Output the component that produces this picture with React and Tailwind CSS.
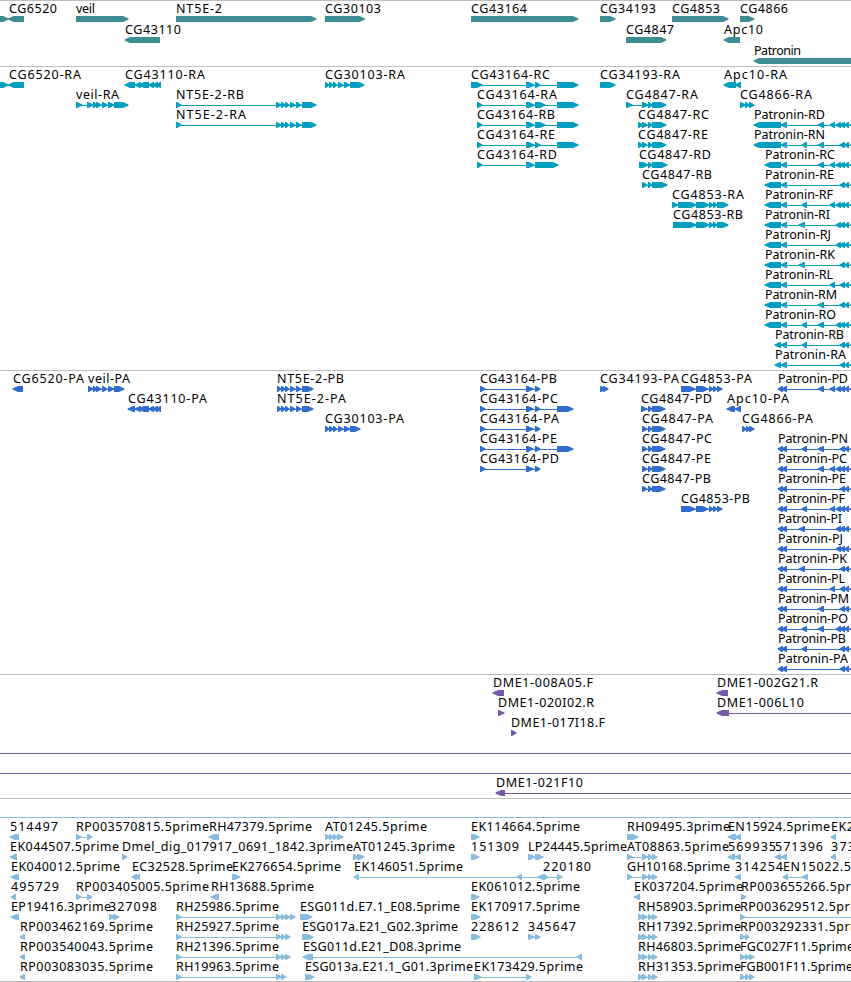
const WIDTH = 851;
const HEAD = 6;

// Advance width of each label character, in pixels
const ADVANCE = {
    A: 9, B: 7, C: 8, D: 9, E: 7, F: 6, G: 8, H: 9, I: 3, J: 4, K: 8, L: 6, M: 10, N: 9,
    O: 9, P: 7, R: 8, S: 7, T: 7, a: 7, c: 6, d: 8, e: 7, g: 8, i: 3, l: 3, m: 11, n: 7,
    o: 7, p: 8, r: 5, t: 4, v: 6, "-": 7, _: 6, ".": 4,
};

const labelWidth = (label) =>
    [...label].reduce((sum, ch) => sum + (ADVANCE[ch] ?? 8), 0);

// Exon sets that several transcripts share
const nt5eCds = [277, 281, 281, 285, 285, 289, 290, 295, 296, 301, 302, 313];
const nt5e = [176, 181, 276, 281, 281, 285, 285, 289, 290, 295, 296, 301, 302, 316];
const cg4847 = [638, 643, 642, 647, 648, 652, 652, 666];
const cg4847Cds = [642, 647, 648, 652, 652, 665];
const cg4853 = [696, 709, 709, 713, 713, 717, 717, 728];
const cg4853Cds = [681, 695, 696, 708, 709, 713, 713, 717, 717, 722];
const cg43164Cds = [480, 485, 526, 533, 535, 540];
const rhExons = [638, 643, 642, 647, 648, 652, 652, 657];
const tail2 = [840, 845, 845, 849, 850, 860];
const tail3 = [836, 841, ...tail2];
const tail4 = [830, 835, ...tail3];
const long = [754, 781, 781, 787];
const mid = [765, 781, 781, 787];
const short = [775, 781, 781, 787];
const cds = [778, 783, 782, 787];

// Feature: [label, strand, exons as start/end pairs]
const tracks = [
    {
        name: "genes",
        color: "#3d8d92",
        rowClass: "h-[21px]",
        boxClass: "h-[66px]",
        rows: [
            [
                ["", 1, [-20, 8]],
                ["CG6520", -1, [8.5, 24]],
                ["veil", 1, [76, 128]],
                ["NT5E-2", 1, [176, 316]],
                ["CG30103", 1, [325, 364.5]],
                ["CG43164", 1, [471, 578]],
                ["CG34193", 1, [600, 615]],
                ["CG4853", 1, [672, 728]],
                ["CG4866", 1, [740, 754]],
            ],
            [
                ["CG43110", -1, [125, 160]],
                ["CG4847", 1, [626, 666]],
                ["Apc10", -1, [724, 740]],
            ],
            [["Patronin", -1, [754, 860]]],
        ],
    },
    {
        name: "transcripts",
        color: "#009fc0",
        rowClass: "h-5",
        boxClass: "h-[304px]",
        rows: [
            [
                ["", 1, [-20, 8]],
                ["CG6520-RA", -1, [8.5, 24]],
                ["CG43110-RA", -1, [125, 135, 135, 141, 139, 149, 149, 154, 153, 158, 157, 161]],
                ["CG30103-RA", 1, [325, 329, 329, 333, 333, 337, 338, 343, 344, 350, 350, 364]],
                ["CG43164-RC", 1, [471, 482, 526, 534, 535, 540, 557, 578]],
                ["CG34193-RA", 1, [600, 604, 602, 615]],
                ["Apc10-RA", -1, [724, 736, 735, 741]],
            ],
            [
                ["veil-RA", 1, [76, 82, 87, 93, 93, 97, 96, 101, 102, 107, 108, 114, 114, 128]],
                ["NT5E-2-RB", 1, nt5e],
                ["CG43164-RA", 1, [477, 482, 526, 534, 535, 545, 557, 578]],
                ["CG4847-RA", 1, [626, 632, 642, 648, 648, 652, 652, 666]],
                ["CG4866-RA", 1, [740, 745, 745, 749, 749, 754]],
            ],
            [
                ["NT5E-2-RA", 1, nt5e],
                ["CG43164-RB", 1, [477, 482, 526, 534, 535, 545, 557, 578]],
                ["CG4847-RC", 1, cg4847],
                ["Patronin-RD", -1, [...long, 818, 824, ...tail4]],
            ],
            [
                ["CG43164-RE", 1, [477, 482, 526, 534, 535, 540, 557, 578]],
                ["CG4847-RE", 1, cg4847],
                ["Patronin-RN", -1, [...long, 802, 807, 818, 824, ...tail2]],
            ],
            [
                ["CG43164-RD", 1, [477, 482, 526, 534, 535, 558]],
                ["CG4847-RD", 1, [639, 648, 648, 652, 652, 667]],
                ["Patronin-RC", -1, [...mid, 818, 824, ...tail4]],
            ],
            [
                ["CG4847-RB", 1, [642, 647, 648, 652, 652, 667]],
                ["Patronin-RE", -1, [...mid, ...tail2]],
            ],
            [
                ["CG4853-RA", 1, [672, 678, 678, 696, ...cg4853]],
                ["Patronin-RF", -1, [...mid, 802, 807, ...tail4]],
            ],
            [
                ["CG4853-RB", 1, [673, 696, ...cg4853]],
                ["Patronin-RI", -1, [...mid, 799, 805, ...tail3]],
            ],
            [["Patronin-RJ", -1, [...mid, ...tail3]]],
            [["Patronin-RK", -1, [...mid, 799, 805, ...tail2]]],
            [["Patronin-RL", -1, [...mid, 830, 835, ...tail2]]],
            [["Patronin-RM", -1, [...mid, 818, 824, ...tail2]]],
            [["Patronin-RO", -1, [...mid, 802, 807, 818, 824, ...tail3]]],
            [["Patronin-RB", -1, [...short, 802, 807, ...tail2]]],
            [["Patronin-RA", -1, [...short, ...tail2]]],
        ],
    },
    {
        name: "proteins",
        color: "#326dcd",
        rowClass: "h-5",
        boxClass: "h-[304px]",
        rows: [
            [
                ["CG6520-PA", -1, [13, 23]],
                ["veil-PA", 1, [88, 93, 93, 97, 96, 101, 102, 107, 108, 114, 114, 124]],
                ["NT5E-2-PB", 1, nt5eCds],
                ["CG43164-PB", 1, cg43164Cds],
                ["CG34193-PA", 1, [600, 605, 603, 608]],
                ["CG4853-PA", 1, cg4853Cds],
                ["Patronin-PD", -1, [...cds, 818, 824, ...tail4]],
            ],
            [
                ["CG43110-PA", -1, [128, 135, 135, 141, 139, 149, 149, 154, 153, 158, 157, 161]],
                ["NT5E-2-PA", 1, nt5eCds],
                ["CG43164-PC", 1, [...cg43164Cds, 557, 573]],
                ["CG4847-PD", 1, [641, 647, 648, 652, 652, 665]],
                ["Apc10-PA", -1, [727, 735, 735, 741]],
            ],
            [
                ["CG30103-PA", 1, [325, 329, 329, 333, 333, 337, 338, 343, 344, 350, 350, 360]],
                ["CG43164-PA", 1, cg43164Cds],
                ["CG4847-PA", 1, cg4847Cds],
                ["CG4866-PA", 1, [742, 746, 746, 750, 749, 754]],
            ],
            [
                ["CG43164-PE", 1, [...cg43164Cds, 557, 573]],
                ["CG4847-PC", 1, cg4847Cds],
                ["Patronin-PN", -1, [...cds, 802, 807, 818, 824, ...tail2]],
            ],
            [
                ["CG43164-PD", 1, cg43164Cds],
                ["CG4847-PE", 1, cg4847Cds],
                ["Patronin-PC", -1, [...cds, 818, 824, ...tail4]],
            ],
            [
                ["CG4847-PB", 1, cg4847Cds],
                ["Patronin-PE", -1, [...cds, ...tail2]],
            ],
            [
                ["CG4853-PB", 1, cg4853Cds],
                ["Patronin-PF", -1, [...cds, 802, 807, ...tail4]],
            ],
            [["Patronin-PI", -1, [...cds, 799, 805, ...tail3]]],
            [["Patronin-PJ", -1, [...cds, ...tail3]]],
            [["Patronin-PK", -1, [...cds, 799, 805, ...tail2]]],
            [["Patronin-PL", -1, [...cds, 830, 835, ...tail2]]],
            [["Patronin-PM", -1, [...cds, 818, 824, ...tail2]]],
            [["Patronin-PO", -1, [...cds, 802, 807, 818, 824, ...tail3]]],
            [["Patronin-PB", -1, [...cds, 802, 807, ...tail2]]],
            [["Patronin-PA", -1, [...cds, ...tail2]]],
        ],
    },
    {
        name: "clones",
        color: "#7759a8",
        rowClass: "h-5",
        boxClass: "h-[124px]",
        rows: [
            [
                ["DME1-008A05.F", -1, [493, 504]],
                ["DME1-002G21.R", -1, [717, 728]],
            ],
            [
                ["DME1-020I02.R", 1, [498, 504]],
                ["DME1-006L10", -1, [717, 729, 860, 866]],
            ],
            [["DME1-017I18.F", 1, [511, 516]]],
            [["", 1, [-20, -10, 860, 866]]],
            [["", 1, [-20, -10, 860, 866]]],
            [["DME1-021F10", -1, [496, 505, 860, 866]]],
        ],
    },
    {
        name: "ests",
        color: "#88bcdd",
        rowClass: "h-5",
        boxClass: "h-[183px]",
        rows: [
            [["", 1, [-20, -10, 860, 866]]],
            [
                ["514497", -1, [10, 19]],
                ["RP003570815.5prime", 1, [76, 81, 87, 92]],
                ["RH47379.5prime", -1, [209, 219]],
                ["AT01245.5prime", 1, [325, 329, 329, 333, 333, 337, 337, 343]],
                ["EK114664.5prime", 1, [471, 479]],
                ["RH09495.3prime", 1, [627, 638]],
                ["EN15924.5prime", -1, [728, 736, 735, 741]],
                ["EK2", -1, [831, 836]],
            ],
            [
                ["EK044507.5prime", -1, [10, 17]],
                ["Dmel_dig_017917_0691_1842.3prime", 1, [122, 127]],
                ["AT01245.3prime", 1, [353, 358, 357, 364]],
                ["151309", 1, [471, 479]],
                ["LP24445.5prime", 1, [528, 535, 535, 543]],
                ["AT08863.5prime", 1, [627, 632, 642, 648, 648, 652, 652, 657]],
                ["569935", -1, [728, 735, 735, 741]],
                ["571396", -1, [775, 781, 781, 787]],
                ["373", -1, [831, 836]],
            ],
            [
                ["EK040012.5prime", -1, [11, 19]],
                ["EC32528.5prime", -1, [132, 137, 136, 140]],
                ["EK276654.5prime", 1, [232, 240]],
                ["EK146051.5prime", -1, [354, 359, 517, 522, 538, 545]],
                ["220180", 1, [543, 548, 557, 562]],
                ["GH10168.5prime", 1, [627, 632, 642, 648, 648, 652, 652, 657]],
                ["314254", -1, [735, 741]],
                ["EN15022.5", -1, [783, 788, 802, 808]],
            ],
            [
                ["495729", -1, [11, 16]],
                ["RP003405005.5prime", 1, [76, 81, 87, 92]],
                ["RH13688.5prime", -1, [211, 219]],
                ["EK061012.5prime", 1, [471, 479]],
                ["EK037204.5prime", -1, [634, 640]],
                ["RP003655266.5prime", 1, [741, 746]],
            ],
            [
                ["EP19416.3prime", -1, [11, 19]],
                ["327098", 1, [109, 114, 113, 119]],
                ["RH25986.5prime", 1, [176, 181, 276, 281, 281, 285, 285, 290, 290, 295]],
                ["ESG011d.E7.1_E08.5prime", 1, [300, 312]],
                ["EK170917.5prime", 1, [471, 480]],
                ["RH58903.5prime", 1, rhExons],
                ["RP003629512.5prime", 1, [740, 745, 860, 866]],
            ],
            [
                ["RP003462169.5prime", -1, [20, 25]],
                ["RH25927.5prime", 1, [176, 181, 276, 281, 281, 285, 285, 290]],
                ["ESG017a.E21_G02.3prime", 1, [302, 313]],
                ["228612", 1, [471, 480]],
                ["345647", 1, [528, 534, 535, 540]],
                ["RH17392.5prime", 1, rhExons],
                ["RP003292331.5prime", 1, [740, 745, 745, 749]],
            ],
            [
                ["RP003540043.5prime", -1, [20, 25]],
                ["RH21396.5prime", 1, [176, 181, 276, 281, 281, 285, 285, 290]],
                ["ESG011d.E21_D08.3prime", -1, [303, 313, 577, 582]],
                ["RH46803.5prime", 1, rhExons],
                ["FGC027F11.5prime", 1, [740, 745, 745, 749, 749, 754]],
            ],
            [
                ["RP003083035.5prime", -1, [20, 25]],
                ["RH19963.5prime", 1, [176, 181, 276, 281, 281, 286]],
                ["ESG013a.E21.1_G01.3prime", 1, [305, 314]],
                ["EK173429.5prime", 1, [474, 481, 526, 531]],
                ["RH31353.5prime", 1, rhExons],
                ["FGB001F11.5prime", 1, [740, 745, 745, 749, 749, 754]],
            ],
        ],
    },
];

function Exon({ start, end, strand }) {
    const head = Math.min(HEAD, end - start);
    const points =
        strand > 0
            ? `${start},15 ${end - head + 1},15 ${end + 0.5},17.5 ${end + 0.5},18.5 ${end - head + 1},21 ${start},21`
            : `${end},15 ${start + head - 1},15 ${start - 0.5},17.5 ${start - 0.5},18.5 ${start + head - 1},21 ${end},21`;
    return <polygon points={points} />;
}

function Feature({ label, strand, exons, color }) {
    const first = exons[0];
    const last = exons[exons.length - 1];
    const pairs = [];
    for (let i = 0; i < exons.length; i += 2) {
        pairs.push([exons[i], exons[i + 1]]);
    }
    return (
        <g fill={color}>
            {pairs.length > 1 && <rect x={first} y="18" width={last - first} height="1" />}
            {pairs.map(([start, end]) => (
                <Exon key={start} start={start} end={end} strand={strand} />
            ))}
            {label && (
                <text x={Math.round(first)} y="12" fill="#000" textLength={labelWidth(label)} lengthAdjust="spacing">
                    {label}
                </text>
            )}
        </g>
    );
}

function Track({ track }) {
    return (
        <section className={`border-t border-[#bebebe] ${track.boxClass}`} aria-label={track.name}>
            {track.rows.map((row, i) => (
                <div key={i} className={track.rowClass}>
                    <svg width={WIDTH} height="22" className="block overflow-visible">
                        {row.map(([label, strand, exons]) => (
                            <Feature key={label + exons[0]} label={label} strand={strand} exons={exons} color={track.color} />
                        ))}
                    </svg>
                </div>
            ))}
        </section>
    );
}

export default function App() {
    return (
        <div className="h-[982px] w-[851px] overflow-hidden border-b border-[#bebebe] bg-white font-['Noto_Sans','DejaVu_Sans',sans-serif] text-[12.5px]">
            {tracks.map((track) => (
                <Track key={track.name} track={track} />
            ))}
        </div>
    );
}
